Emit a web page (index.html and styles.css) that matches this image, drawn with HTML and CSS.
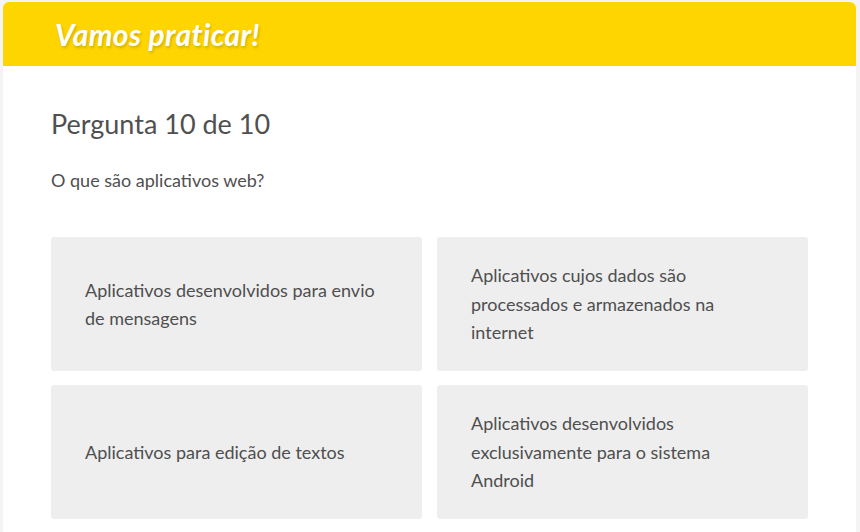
FILE: index.html
```html
<!DOCTYPE html>
<html lang="pt">
<head>
<meta charset="utf-8">
<title>Vamos praticar!</title>
<link rel="stylesheet" href="styles.css">
</head>
<body>
<div class="card">
  <header class="card-header">
    <h1 class="title">Vamos praticar!</h1>
  </header>
  <main class="card-body">
    <h2 class="question-number">Pergunta 10 de 10</h2>
    <p class="question">O que são aplicativos web?</p>
    <div class="options">
      <div class="option">Aplicativos desenvolvidos para envio de mensagens</div>
      <div class="option">Aplicativos cujos dados são processados e armazenados na internet</div>
      <div class="option">Aplicativos para edição de textos</div>
      <div class="option">Aplicativos desenvolvidos exclusivamente para o sistema Android</div>
    </div>
  </main>
</div>
</body>
</html>
```

FILE: styles.css
```css
html, body {
  margin: 0;
  padding: 0;
}
body {
  background: #f4f4f4;
  font-family: Lato, "Open Sans", "Liberation Sans", sans-serif;
  color: #4f4f4f;
  padding: 2px 4px 0 3px;
  height: 532px;
  box-sizing: border-box;
  overflow: hidden;
}
.card {
  background: #ffffff;
  border-radius: 6px 6px 0 0;
  height: 530px;
}
.card-header {
  background: #ffd500;
  border-radius: 6px 6px 0 0;
  height: 64px;
  display: flex;
  align-items: center;
  padding-left: 52px;
}
.title {
  margin: 0;
  font-size: 30px;
  font-weight: 700;
  font-style: italic;
  color: #ffffff;
  text-shadow: 1px 2px 3px rgba(0, 0, 0, 0.18);
  letter-spacing: 0.4px;
}
.card-body {
  padding: 41px 47px 0 48px;
}
.question-number {
  margin: 0;
  font-size: 27px;
  font-weight: 400;
  color: #505050;
  line-height: 34px;
}
.question {
  margin: 27px 0 0;
  font-size: 18px;
  line-height: 24px;
  color: #4f4f4f;
}
.options {
  margin-top: 45px;
  display: grid;
  grid-template-columns: 371px 371px;
  grid-auto-rows: 134px;
  column-gap: 15px;
  row-gap: 14px;
}
.option {
  background: #eeeeee;
  border-radius: 3px;
  display: flex;
  align-items: center;
  padding: 0 37px 0 34px;
  font-size: 18px;
  line-height: 28.5px;
  color: #4f4f4f;
}
```
